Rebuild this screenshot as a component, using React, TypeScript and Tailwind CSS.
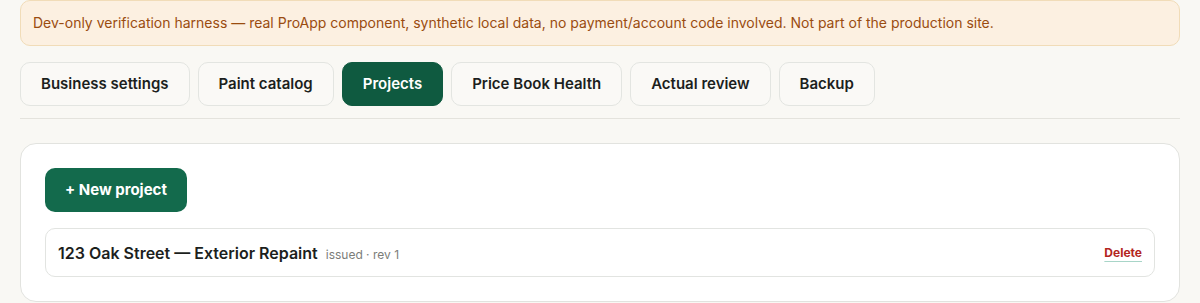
const TABS = ['Business settings', 'Paint catalog', 'Projects', 'Price Book Health', 'Actual review', 'Backup']

export default function App() {
  const active = 'Projects'

  return (
    <div className="min-h-screen bg-[#f9f8f4] px-5 font-['Inter','Noto_Sans',sans-serif] text-[#1c1f1d]">
      <div className="rounded-[10px] border border-[#f1dcb8] bg-[#fcf0e1] px-3 py-3 text-sm leading-5 text-[#9a4c10]">
        Dev-only verification harness — real ProApp component, synthetic local data, no payment/account code
        involved. Not part of the production site.
      </div>

      <nav className="mt-4 flex gap-2 border-b border-[#e4e3dd] pb-3">
        {TABS.map((tab) => (
          <button
            key={tab}
            className={
              tab === active
                ? 'h-11 rounded-[10px] border border-[#0f5a40] bg-[#0f5a40] px-5 text-[15px] font-semibold text-white'
                : 'h-11 rounded-[10px] border border-[#e3e5e1] bg-[#faf9f6] px-5 text-[15px] font-semibold text-[#1c1f1d]'
            }
          >
            {tab}
          </button>
        ))}
      </nav>

      <section className="mt-6 rounded-2xl border border-[#e2e3df] bg-white p-6">
        <button className="h-11 rounded-[10px] bg-[#136a4c] px-5 text-[15px] font-bold text-white">
          + New project
        </button>

        <div className="mt-4 flex h-[49px] items-center justify-between rounded-[10px] border border-[#e2e4e1] px-3">
          <div className="flex items-baseline gap-2">
            <span className="text-base font-semibold text-[#1c1f1d]">123 Oak Street — Exterior Repaint</span>
            <span className="text-xs text-[#7b7d79]">issued · rev 1</span>
          </div>
          <button className="text-xs font-bold text-[#b3261e] underline decoration-[#a8d5c8] underline-offset-4">
            Delete
          </button>
        </div>
      </section>
    </div>
  )
}
